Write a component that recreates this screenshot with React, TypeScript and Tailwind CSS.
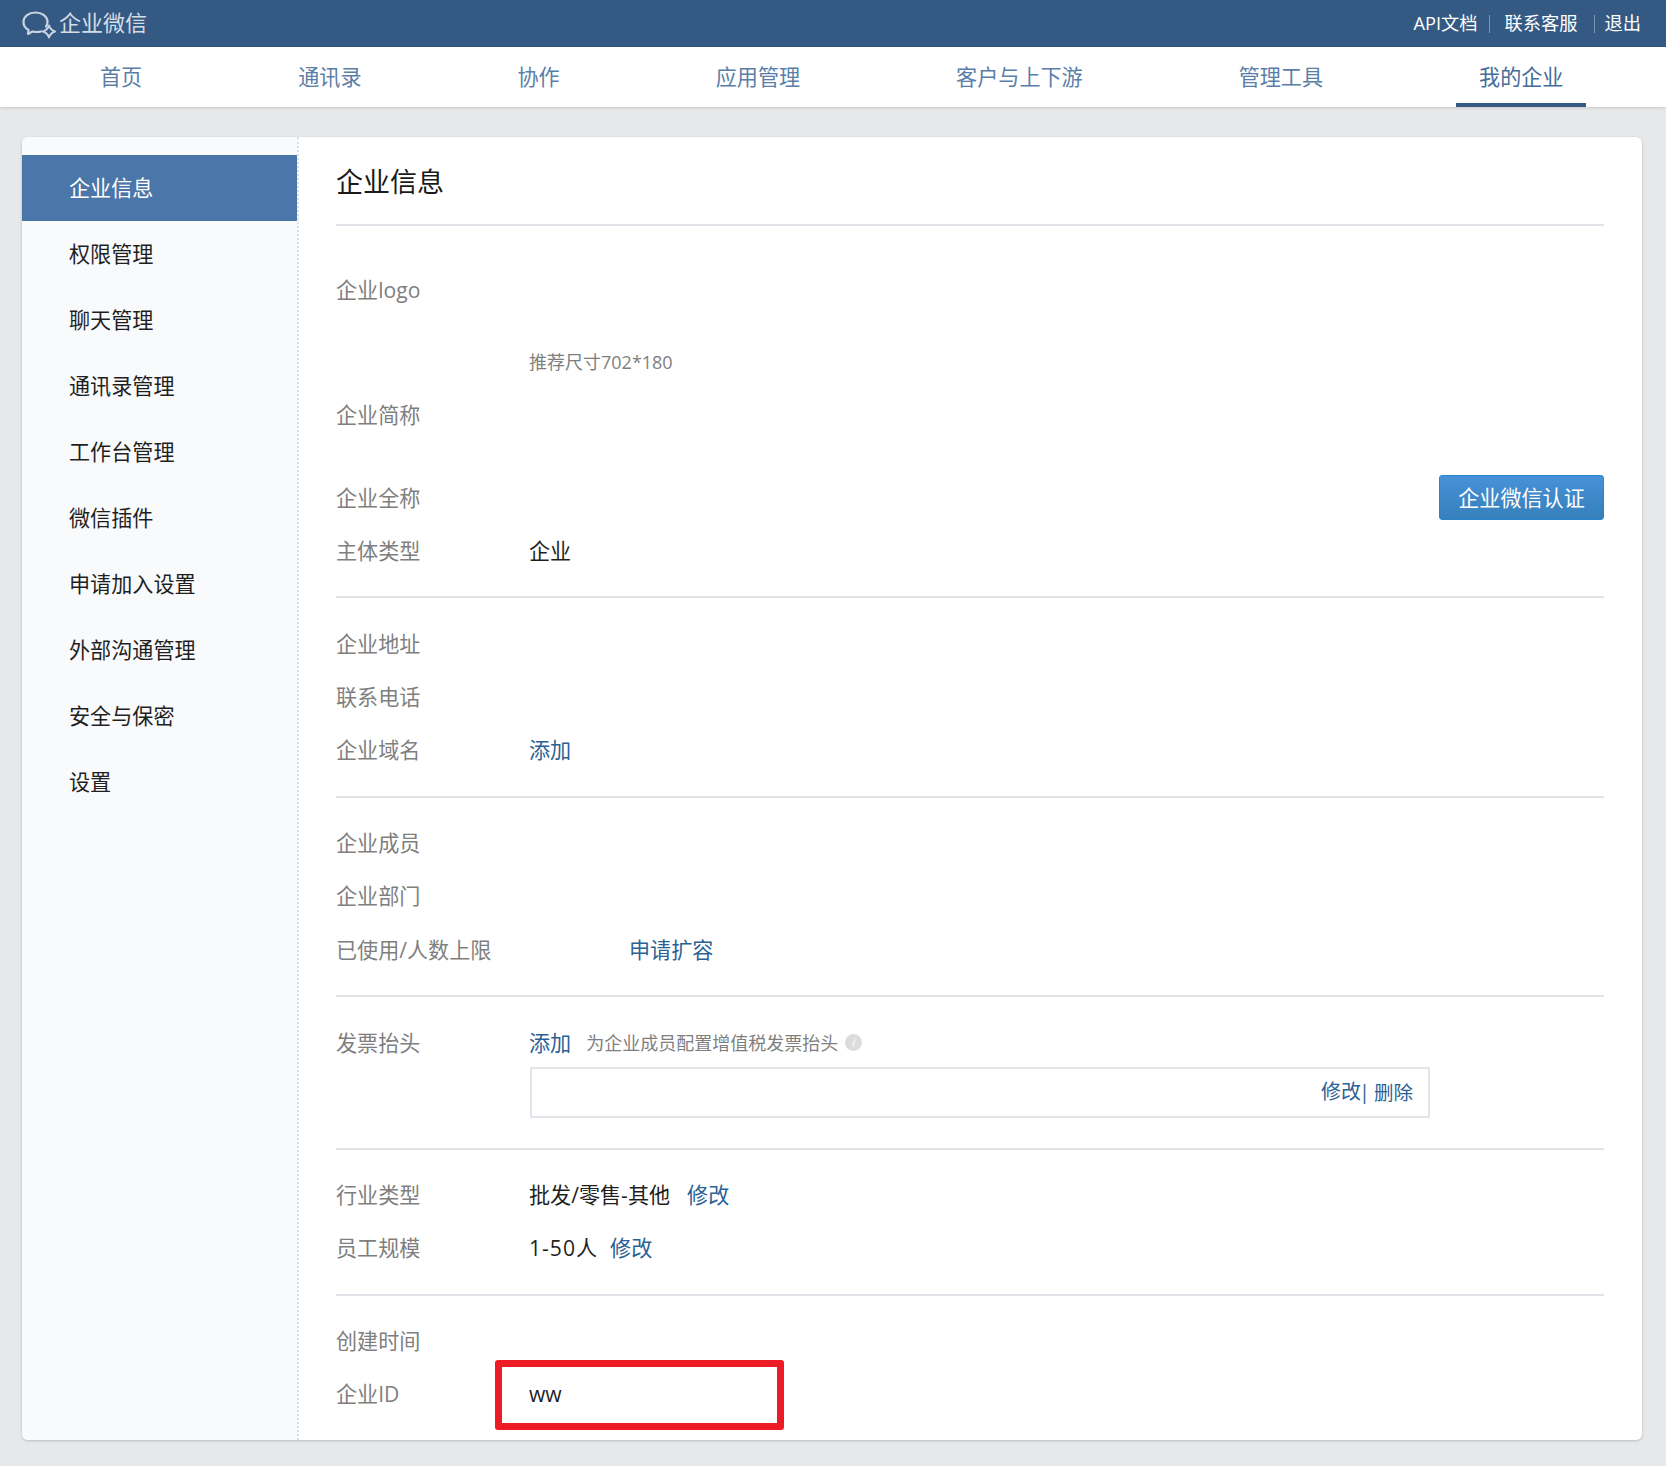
const FONT = "font-['Open_Sans','Noto_Sans_CJK_SC',sans-serif]";

const navItems = ["首页", "通讯录", "协作", "应用管理", "客户与上下游", "管理工具", "我的企业"];
const sideItems = ["企业信息", "权限管理", "聊天管理", "通讯录管理", "工作台管理", "微信插件", "申请加入设置", "外部沟通管理", "安全与保密", "设置"];

function Logo() {
  return (
    <svg width="34" height="32" viewBox="0 0 34 32" fill="none" className="shrink-0 opacity-85">
      <path d="M24 18.5C25 17 25.5 15.5 25.5 14 25.5 8.5 20 4.5 13.5 4.5 7 4.5 1.5 8.5 1.5 14c0 3.5 2 6.3 5 8l-.5 4 4.500-2.500c1.500.3 3 .5 4.500.5 1.500 0 3-.2 4-.5" stroke="#e3e9ef" strokeWidth="2.200" strokeLinecap="round" strokeLinejoin="round" />
      <path d="M27 17.500Q28.500 22 33 23.500 28.500 25 27 29.500 25.500 25 21 23.500 25.500 22 27 17.500Z" stroke="#e3e9ef" strokeWidth="2" strokeLinejoin="round" />
    </svg>
  );
}

function Row({ label, children, right }: { label: string; children?: React.ReactNode; right?: React.ReactNode }) {
  return (
    <div className="flex h-[53.4px] items-center">
      <div className="w-[193px] shrink-0 text-[#7f7f7f]">{label}</div>
      <div className="flex flex-1 items-center text-[#1f1f1f]">{children}</div>
      {right}
    </div>
  );
}

function A({ children, className = "" }: { children: React.ReactNode; className?: string }) {
  return <a className={`cursor-pointer text-[#2b6295] ${className}`}>{children}</a>;
}

export default function App() {
  return (
    <div className={`${FONT} min-h-[1466px] bg-[#e7e8ea] text-[21.1px] leading-none`}>
      <header className="flex h-[47px] items-center justify-between bg-[#345a84] pl-[22px] pr-[25px]">
        <div className="flex items-center gap-[3px]">
          <Logo />
          <span className="mb-[3px] text-[22px] text-[#d4dce5]">企业微信</span>
        </div>
        <div className="flex items-center text-[18.25px] text-white">
          <span>API文档</span>
          <span className="ml-[11px] mr-[10px] h-[18px] w-[1px] bg-[#8097b2]" />
          <span className="ml-[5px]">联系客服</span>
          <span className="ml-[16px] mr-[10px] h-[18px] w-[1px] bg-[#8097b2]" />
          <span>退出</span>
        </div>
      </header>

      <nav className="flex h-[60px] bg-white pl-[77px] shadow-[0_1px_3px_rgba(0,0,0,0.15)]">
        <div className="flex gap-[110px]">
          {navItems.map((item, i) => (
            <div
              key={item}
              className={`flex items-center border-b-[4px] px-[23px] pt-[4px] text-[#5a7ea8] ${i === navItems.length - 1 ? "border-[#345a84] text-[#456c9a]" : "border-transparent"}`}
            >
              {item}
            </div>
          ))}
        </div>
      </nav>

      <div className="px-[22px] pt-[30px]">
        <div className="flex h-[1303px] w-[1620px] overflow-hidden rounded-[6px] bg-white shadow-[0_1px_3px_rgba(0,0,0,0.2)]">
          <aside className="w-[277px] shrink-0 border-r-2 border-dotted border-[#dcdfe3] bg-[#f9fafc] pt-[18px]">
            {sideItems.map((item, i) => (
              <div
                key={item}
                className={`flex h-[66px] items-center pl-[47px] ${i === 0 ? "bg-[#4a76a9] text-white" : "text-[#1f1f1f]"}`}
              >
                {item}
              </div>
            ))}
          </aside>

          <main className="flex-1 pl-[37px] pr-[38px]">
            <h1 className="flex h-[89px] items-center border-b-2 border-[#dfe2e6] pt-[1px] text-[27px] font-normal text-[#1a1a1a]">企业信息</h1>

            <section className="border-b-2 border-[#dfe2e6] pb-[18px] pt-[37px]">
              <Row label="企业logo" />
              <div className="mb-[8px] mt-[29px] flex h-[34px] items-center pl-[193px] text-[18px] text-[#7f7f7f]">推荐尺寸702*180</div>
              <Row label="企业简称" />
              <div className="mt-[30px]">
                <Row
                  label="企业全称"
                  right={
                    <button className="flex h-[45px] w-[165px] items-center justify-center rounded-[3px] border border-[#2a86cc] bg-gradient-to-b from-[#4791d8] to-[#3580bb] text-white">
                      企业微信认证
                    </button>
                  }
                />
              </div>
              <Row label="主体类型">企业</Row>
            </section>

            <section className="border-b-2 border-[#dfe2e6] pb-[19px] pt-[19px]">
              <Row label="企业地址" />
              <Row label="联系电话" />
              <Row label="企业域名"><A>添加</A></Row>
            </section>

            <section className="border-b-2 border-[#dfe2e6] pb-[19px] pt-[18px]">
              <Row label="企业成员" />
              <Row label="企业部门" />
              <Row label="已使用/人数上限"><A className="ml-[100px]">申请扩容</A></Row>
            </section>

            <section className="border-b-2 border-[#dfe2e6] pb-[30px] pt-[22px]">
              <div className="flex h-[48px] items-center">
                <div className="w-[193px] shrink-0 text-[#7f7f7f]">发票抬头</div>
                <A>添加</A>
                <span className="ml-[15px] text-[18px] text-[#7f7f7f]">为企业成员配置增值税发票抬头</span>
                <span className="ml-[7px] flex h-[17px] w-[17px] items-center justify-center rounded-full bg-[#dcdcdc] text-[12px] italic text-white">i</span>
              </div>
              <div className="ml-[194px] flex h-[51px] w-[900px] items-center justify-end border-2 border-[#e3e4ea] pr-[15px] text-[20px]">
                <A>修改</A>
                <span className="ml-[-2px] text-[#2b6295]">|</span>
                <A className="ml-[4px] text-[19.5px]">删除</A>
              </div>
            </section>

            <section className="border-b-2 border-[#dfe2e6] pb-[19px] pt-[18px]">
              <Row label="行业类型">批发/零售-其他<A className="ml-[17px]">修改</A></Row>
              <Row label="员工规模"><span className="tracking-[1px]">1-50</span>人<A className="ml-[13px]">修改</A></Row>
            </section>

            <section className="pt-[18px]">
              <Row label="创建时间" />
              <Row label="企业ID">
                <span className="relative">
                  ww
                  <span className="absolute left-[-34px] top-[-23px] h-[70px] w-[289px] rounded-[3px] border-[7px] border-[#ed1c24]" />
                </span>
              </Row>
            </section>
          </main>
        </div>
      </div>
    </div>
  );
}
